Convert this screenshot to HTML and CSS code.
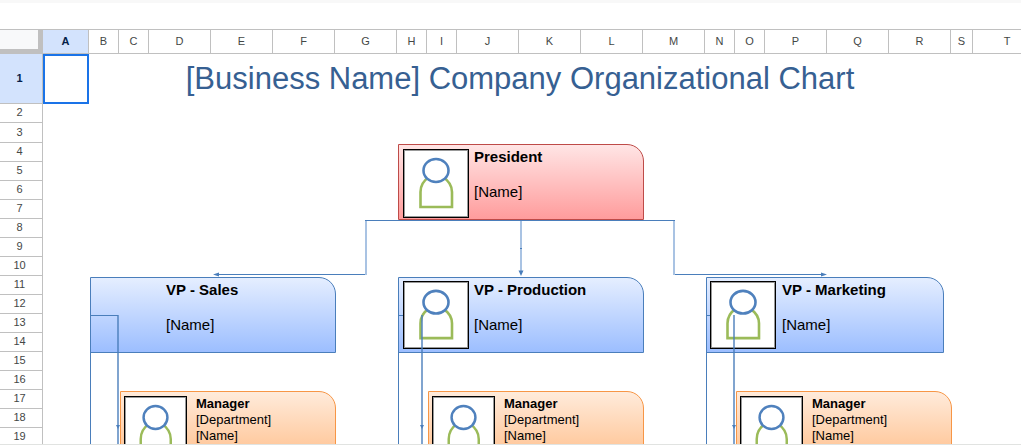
FILE: index.html
```html
<!DOCTYPE html>
<html lang="en">
<head>
    <meta charset="UTF-8">
    <meta name="viewport" content="width=device-width, initial-scale=1.0">
    <link rel="stylesheet" href="styles.css">
    <title>Company Organizational Chart</title>
</head>
<body>
    <!-- avatar shape shared by all the boxes -->
    <svg class="defs" width="0" height="0">
        <symbol id="person" viewBox="0 0 64 67" preserveAspectRatio="none">
            <path d="M16.500 57V42C16.500 35 19 31 25 27H39C45 31 48 35 48 42V57Z" fill="#fff" stroke="#9bbb59" stroke-width="2.600"/>
            <ellipse cx="32" cy="20.500" rx="12.500" ry="11.500" fill="#fff" stroke="#4f81bd" stroke-width="2.600"/>
        </symbol>
    </svg>
    <main class="sheet">
        <div class="toolbar-edge"></div>
        <table class="grid">
            <colgroup>
                <col class="col-head">
                <col class="col-a">
                <col class="narrow" span="2">
                <col class="wide" span="4">
                <col class="narrow" span="2">
                <col class="wide" span="4">
                <col class="narrow" span="2">
                <col class="wide" span="3">
                <col class="col-s">
                <col>
            </colgroup>
            <thead>
                <tr>
                    <td class="corner"></td>
                    <th class="selected">A</th>
                    <th>B</th>
                    <th>C</th>
                    <th>D</th>
                    <th>E</th>
                    <th>F</th>
                    <th>G</th>
                    <th>H</th>
                    <th>I</th>
                    <th>J</th>
                    <th>K</th>
                    <th>L</th>
                    <th>M</th>
                    <th>N</th>
                    <th>O</th>
                    <th>P</th>
                    <th>Q</th>
                    <th>R</th>
                    <th>S</th>
                    <th>T</th>
                </tr>
            </thead>
            <tbody>
                <tr class="title-row">
                    <th class="selected">1</th>
                    <td class="active-cell"></td>
                    <td class="title-cell" colspan="17"><h1>[Business Name] Company Organizational Chart</h1></td>
                    <td colspan="2"></td>
                </tr>
                <tr><th>2</th><td colspan="20"></td></tr>
                <tr class="row-3"><th>3</th><td colspan="20"></td></tr>
                <tr><th>4</th><td colspan="20"></td></tr>
                <tr><th>5</th><td colspan="20"></td></tr>
                <tr><th>6</th><td colspan="20"></td></tr>
                <tr><th>7</th><td colspan="20"></td></tr>
                <tr><th>8</th><td colspan="20"></td></tr>
                <tr><th>9</th><td colspan="20"></td></tr>
                <tr><th>10</th><td colspan="20"></td></tr>
                <tr><th>11</th><td colspan="20"></td></tr>
                <tr><th>12</th><td colspan="20"></td></tr>
                <tr><th>13</th><td colspan="20"></td></tr>
                <tr><th>14</th><td colspan="20"></td></tr>
                <tr><th>15</th><td colspan="20"></td></tr>
                <tr><th>16</th><td colspan="20"></td></tr>
                <tr><th>17</th><td colspan="20"></td></tr>
                <tr><th>18</th><td colspan="20"></td></tr>
                <tr><th>19</th><td colspan="20"></td></tr>
            </tbody>
        </table>

        <!-- org chart drawn over the cells -->
        <div class="chart">
            <div class="node red president">
                <svg class="avatar"><use href="#person"/></svg>
                <div class="info">
                    <h2>President</h2>
                    <p>[Name]</p>
                </div>
            </div>

            <div class="node blue vp-sales">
                <div class="info">
                    <h2>VP - Sales</h2>
                    <p>[Name]</p>
                </div>
            </div>
            <div class="node blue vp-production">
                <svg class="avatar"><use href="#person"/></svg>
                <div class="info">
                    <h2>VP - Production</h2>
                    <p>[Name]</p>
                </div>
            </div>
            <div class="node blue vp-marketing">
                <svg class="avatar"><use href="#person"/></svg>
                <div class="info">
                    <h2>VP - Marketing</h2>
                    <p>[Name]</p>
                </div>
            </div>

            <div class="node orange manager-sales">
                <svg class="avatar"><use href="#person"/></svg>
                <div class="info">
                    <h3>Manager</h3>
                    <p>[Department]</p>
                    <p>[Name]</p>
                </div>
            </div>
            <div class="node orange manager-production">
                <svg class="avatar"><use href="#person"/></svg>
                <div class="info">
                    <h3>Manager</h3>
                    <p>[Department]</p>
                    <p>[Name]</p>
                </div>
            </div>
            <div class="node orange manager-marketing">
                <svg class="avatar"><use href="#person"/></svg>
                <div class="info">
                    <h3>Manager</h3>
                    <p>[Department]</p>
                    <p>[Name]</p>
                </div>
            </div>

            <svg class="lines" width="1021" height="480">
                <!-- president to the VPs -->
                <path class="line" d="M365 220.500H675"/>
                <path class="line" d="M216 274.500H367M673 274.500H824"/>
                <path class="soft" d="M366 221V275M674 221V275M521 221V272"/>
                <path class="arrow" d="M213 274.500L219 272.500V276.500ZM827 274.500L821 272.500V276.500ZM521 276L518.500 270.500H523.500ZM520 248H522V249H520Z"/>
                <!-- left edges going down -->
                <path class="line" d="M90.500 352V480M398.500 352V480M706.500 352V480"/>
                <path class="line" d="M90 315.500H118M398 315.500H403M706 315.500H710"/>
                <!-- VPs to the managers -->
                <path class="drop" d="M118 315V480M422 315V480M734 315V480"/>
                <path class="arrow" d="M116 425H120L118 429ZM420 425H424L422 429ZM732 425H736L734 429Z"/>
            </svg>
        </div>
    </main>
</body>
</html>
```
FILE: styles.css
```css
* {
    box-sizing: border-box;
}

body {
    margin: 0;
    background-color: #fff;
    color: #000;
    font-family: "Liberation Sans", Arial, sans-serif;
}

h1, h2, h3, p {
    margin: 0;
}

.defs {
    position: absolute;
}

.sheet {
    position: relative;
    height: 100vh;
    overflow: hidden;
}

/* bottom edge of the window */
.sheet::after {
    content: "";
    position: absolute;
    left: 0;
    right: 0;
    bottom: 0;
    height: 1px;
    background-color: #e1e3e1;
}

.toolbar-edge {
    height: 29px;
    border-top: 3px solid #f8f8f8;
}

.grid {
    width: 100%;
    min-width: 1042px;
    table-layout: fixed;
    border-collapse: separate;
    border-spacing: 0;
}

.grid th, .grid td {
    height: 19px;
    padding: 0;
}

.grid th {
    padding-bottom: 2px;
    border-right: 1px solid #c0c0c0;
    border-bottom: 1px solid #c0c0c0;
    color: #444746;
    font-size: 11px;
    font-weight: normal;
    line-height: 16px;
}

.grid thead th, .grid .corner {
    height: 25px;
    border-top: 1px solid #c0c0c0;
}

.grid tbody th {
    padding-right: 3px;
}

.grid .row-3 th {
    height: 20px;
}

.grid .title-row th {
    height: 50px;
}

.grid .selected {
    background-color: #d3e3fd;
    color: #041e49;
    font-weight: bold;
}

.grid .corner {
    background-color: #f8f9fa;
    border-right: 5px solid #c0c0c0;
    border-bottom: 5px solid #c0c0c0;
}

.active-cell {
    border: 2px solid #1a73e8;
}

.title-cell {
    text-align: center;
}

.title-cell h1 {
    color: #366092;
    font-size: 31px;
    font-weight: normal;
    line-height: 36px;
}

.col-head {
    width: 43px;
}

.col-a {
    width: 46px;
}

.narrow {
    width: 30px;
}

.wide {
    width: 62px;
}

.col-s {
    width: 22px;
}

.chart {
    position: absolute;
    top: 0;
    left: 0;
}

.lines {
    position: absolute;
    top: 0;
    left: 0;
}

.line {
    fill: none;
    stroke: #4a7ebb;
    stroke-width: 1;
}

.soft {
    fill: none;
    stroke: #a9c3e3;
    stroke-width: 2;
}

.drop {
    fill: none;
    stroke: #4a7ebb;
    stroke-width: 2;
    opacity: 0.7;
}

.arrow {
    fill: #4a7ebb;
}

.node {
    position: absolute;
    display: grid;
    grid-template-columns: 71px 1fr;
    align-items: start;
    width: 246px;
    height: 76px;
    padding: 4px;
    border: 1px solid;
    border-top-right-radius: 17px;
}

.avatar {
    width: 66px;
    height: 69px;
    border: 1px solid #000;
    box-shadow: inset 0 0 0 1px #999;
    background-color: #fff;
}

.info {
    grid-column: 2;
    font-size: 15px;
    line-height: 16px;
}

.info h2 {
    margin-bottom: 19px;
    font-size: 15px;
}

.red {
    border-color: #be4b48;
    background-image: linear-gradient(#ffe5e5, #ff9c9c);
}

.blue {
    padding-top: 3px;
    border-color: #4a7ebb;
    background-image: linear-gradient(#e5eeff, #9cbeff);
}

.blue .avatar {
    height: 68px;
}

.blue .info {
    padding-top: 1px;
}

.orange {
    width: 216px;
    padding-left: 3px;
    grid-template-columns: 72px 1fr;
    border-color: #f79646;
    background-image: linear-gradient(#ffebdb, #ffbd88);
}

.orange .avatar {
    width: 63px;
}

.orange .info {
    font-size: 13px;
    line-height: 16px;
}

.orange h3 {
    font-size: 13px;
}

/* chart positions */
.president {
    left: 398px;
    top: 144px;
}

.vp-sales {
    left: 90px;
    top: 277px;
}

.vp-production {
    left: 398px;
    top: 277px;
}

.vp-marketing {
    left: 706px;
    top: 277px;
    width: 238px;
    padding-left: 3px;
    grid-template-columns: 72px 1fr;
}

.manager-sales {
    left: 120px;
    top: 391px;
}

.manager-production {
    left: 428px;
    top: 391px;
}

.manager-marketing {
    left: 736px;
    top: 391px;
}
```
